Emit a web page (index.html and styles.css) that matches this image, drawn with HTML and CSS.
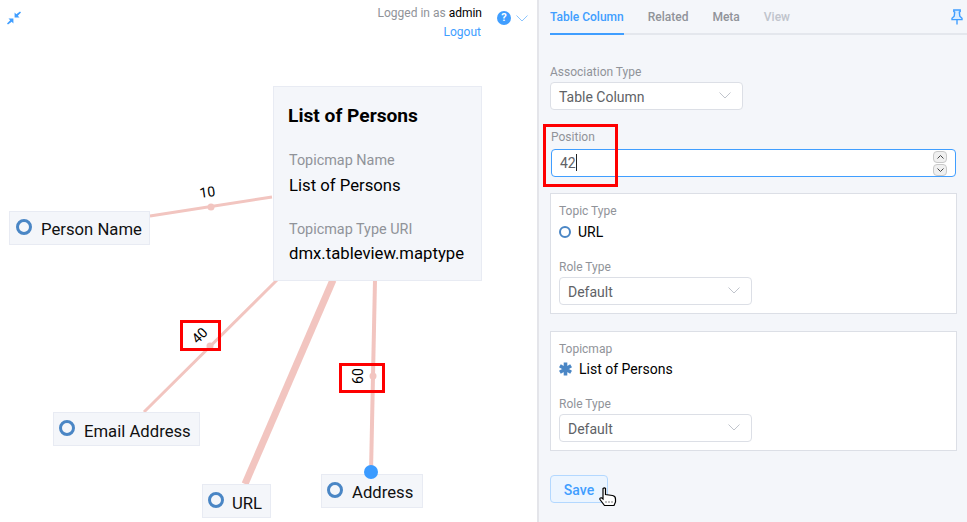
FILE: index.html
```html
<!DOCTYPE html>
<html lang="en">
<head>
    <meta charset="UTF-8">
    <title>Table Column</title>
    <link rel="stylesheet" href="styles.css">
</head>
<body>
    <div class="app">
        <!-- Topicmap canvas -->
        <div class="canvas">
            <svg class="edges" width="537" height="522">
                <line class="edge" x1="150" y1="216" x2="272" y2="197" stroke-width="3"/>
                <circle class="edge-dot" cx="211" cy="207" r="3.5"/>
                <line class="edge" x1="144" y1="412" x2="277" y2="280" stroke-width="3"/>
                <circle class="edge-dot" cx="210" cy="346" r="3.5"/>
                <line class="edge" x1="245" y1="484" x2="333" y2="280" stroke-width="7"/>
                <line class="edge" x1="371" y1="472" x2="375" y2="280" stroke-width="4"/>
                <circle class="edge-dot" cx="373" cy="376" r="3.5"/>
                <text class="edge-label" transform="translate(208 197) rotate(-8)">10</text>
                <text class="edge-label" transform="translate(203 339) rotate(-45)">40</text>
                <text class="edge-label" transform="translate(363 376) rotate(-90)">60</text>
            </svg>

            <svg class="fullscreen-icon" width="14" height="14" viewBox="0 0 14 14">
                <path d="M13 0.5 L14 1.5 L10.8 4.7 L12.5 6.4 L7.6 6.4 L7.6 1.5 L9.3 3.2 Z"/>
                <path d="M1 13.5 L0 12.5 L3.2 9.3 L1.5 7.6 L6.4 7.6 L6.4 12.5 L4.7 10.8 Z"/>
            </svg>

            <div class="login">
                <div class="login-text">
                    <div class="login-state">Logged in as <span class="login-user">admin</span></div>
                    <div class="login-link">Logout</div>
                </div>
                <div class="help">?</div>
                <svg class="help-arrow" width="12" height="7" viewBox="0 0 12 7"><path d="M0.5 0.5 L6 6 L11.5 0.5"/></svg>
            </div>

            <div class="node node-person"><span class="ring"></span>Person Name</div>
            <div class="node node-email"><span class="ring"></span>Email Address</div>
            <div class="node node-url"><span class="ring"></span>URL</div>
            <div class="node node-address"><span class="ring"></span>Address</div>
            <div class="handle"></div>

            <div class="card">
                <div class="card-title">List of Persons</div>
                <div class="card-label">Topicmap Name</div>
                <div class="card-value">List of Persons</div>
                <div class="card-label card-label-2">Topicmap Type URI</div>
                <div class="card-value">dmx.tableview.maptype</div>
            </div>

            <div class="mark mark-40"></div>
            <div class="mark mark-60"></div>
        </div>

        <!-- Detail panel -->
        <div class="panel">
            <div class="tabs">
                <div class="tab tab-active">Table Column</div>
                <div class="tab">Related</div>
                <div class="tab">Meta</div>
                <div class="tab tab-disabled">View</div>
                <svg class="pin" width="12" height="16" viewBox="0 0 12 16">
                    <path d="M2.8 1 H9.2 V2.6 L8.3 3.2 L8.8 7.2 L11 9.2 V10.6 H1 V9.2 L3.2 7.2 L3.7 3.2 L2.8 2.6 Z"/>
                    <path d="M6 10.6 V15.5"/>
                </svg>
            </div>

            <div class="form">
                <div class="field-label">Association Type</div>
                <div class="select select-assoc">
                    <span>Table Column</span>
                    <svg class="select-arrow" width="12" height="7" viewBox="0 0 12 7"><path d="M0.5 0.5 L6 6 L11.5 0.5"/></svg>
                </div>

                <div class="position">
                    <div class="field-label field-label-position">Position</div>
                    <div class="number-input">
                        <span>42</span><span class="caret"></span>
                        <div class="stepper">
                            <div class="step"><svg width="7" height="4" viewBox="0 0 7 4"><path d="M0.5 3.5 L3.5 0.5 L6.5 3.5"/></svg></div>
                            <div class="step"><svg width="7" height="4" viewBox="0 0 7 4"><path d="M0.5 0.5 L3.5 3.5 L6.5 0.5"/></svg></div>
                        </div>
                    </div>
                    <div class="mark mark-position"></div>
                </div>

                <div class="box box-topic">
                    <div class="field-label">Topic Type</div>
                    <div class="player"><span class="ring ring-small"></span>URL</div>
                    <div class="field-label field-label-role">Role Type</div>
                    <div class="select">
                        <span>Default</span>
                        <svg class="select-arrow" width="12" height="7" viewBox="0 0 12 7"><path d="M0.5 0.5 L6 6 L11.5 0.5"/></svg>
                    </div>
                </div>

                <div class="box box-map">
                    <div class="field-label">Topicmap</div>
                    <div class="player">
                        <svg class="asterisk" width="13" height="14" viewBox="0 0 13 14">
                            <path d="M6.5 0.5 V13.5 M0.9 3.8 L12.1 10.2 M0.9 10.2 L12.1 3.8"/>
                        </svg>
                        List of Persons
                    </div>
                    <div class="field-label field-label-role">Role Type</div>
                    <div class="select">
                        <span>Default</span>
                        <svg class="select-arrow" width="12" height="7" viewBox="0 0 12 7"><path d="M0.5 0.5 L6 6 L11.5 0.5"/></svg>
                    </div>
                </div>

                <div class="save-row">
                    <div class="save">Save</div>
                    <svg class="hand" width="18" height="20" viewBox="0 0 18 20">
                        <path d="M4 1.5 Q5.5 0.3 6.5 1.5 V7.5 L13.5 8.5 Q16.5 9 16.5 12 V15 L15 18.5 H5.5 L1 12.5 Q0.5 10.5 2.5 10.8 L4 12 Z"/>
                        <path class="hand-dots" d="M7 14.5 V16.5 M10 14.5 V16.5 M13 14.5 V16.5"/>
                    </svg>
                </div>
            </div>
        </div>
    </div>
</body>
</html>
```

FILE: styles.css
```css
html, body {
    margin: 0;
    height: 100%;
    overflow: hidden;
}
body {
    font-family: Roboto, "Liberation Sans", sans-serif;
    background-color: #fff;
    color: #000;
}
.app {
    display: flex;
    height: 522px;
}

/* Canvas */
.canvas {
    position: relative;
    width: 537px;
    flex: none;
}
.edges {
    position: absolute;
    left: 0;
    top: 0;
}
.edge {
    stroke: #f2c5c0;
}
.edge-dot {
    fill: #f2c5c0;
}
.handle {
    position: absolute;
    left: 364px;
    top: 465px;
    width: 14px;
    height: 14px;
    border-radius: 50%;
    background-color: #3b9bff;
}
.edge-label {
    font-size: 14px;
    text-anchor: middle;
    fill: #000;
}
.fullscreen-icon {
    position: absolute;
    left: 7px;
    top: 11px;
    fill: #409eff;
}
.login {
    position: absolute;
    right: 9px;
    top: 4px;
    display: flex;
    font-size: 12px;
}
.login-text {
    text-align: right;
    margin-right: 15px;
    line-height: 19px;
}
.login-state {
    color: #909399;
}
.login-user {
    color: #000;
}
.login-link {
    color: #409eff;
    padding-right: 1px;
}
.help {
    width: 14px;
    height: 14px;
    margin-top: 7px;
    border-radius: 50%;
    background-color: #409eff;
    color: #fff;
    font-size: 11px;
    font-weight: bold;
    line-height: 14px;
    text-align: center;
}
.help-arrow {
    margin: 11px 0 0 5px;
    fill: none;
    stroke: #8cc5ff;
}
.node {
    position: absolute;
    display: flex;
    align-items: center;
    height: 34px;
    box-sizing: border-box;
    padding: 2px 0 0 5px;
    background-color: #f4f6fa;
    border: 1px solid #e8ebf3;
    font-size: 16.7px;
    color: #111;
}
.node-person { left: 9px; top: 211px; width: 141px; padding-left: 6px; }
.node-email { left: 53px; top: 412px; width: 147px; padding-top: 4px; }
.node-url { left: 202px; top: 484px; width: 69px; padding-top: 4px; }
.node-address { left: 321px; top: 474px; width: 102px; }
.ring {
    width: 16px;
    height: 16px;
    box-sizing: border-box;
    border: 3px solid #4a86c5;
    border-radius: 50%;
    margin: -4px 9px 0 0;
    flex: none;
}
.node-email .ring, .node-url .ring {
    margin-top: -6px;
}
.node-url .ring {
    margin-right: 8px;
}
.card {
    position: absolute;
    left: 273px;
    top: 86px;
    width: 209px;
    height: 195px;
    box-sizing: border-box;
    padding: 17px 14px 0 14px;
    background-color: #f4f6fa;
    border: 1px solid #e8ebf3;
}
.card-title {
    font-size: 19.2px;
    font-weight: bold;
    line-height: 24px;
    margin-bottom: 24px;
}
.card-label {
    padding-left: 1px;
    font-size: 14.4px;
    line-height: 18px;
    color: #909399;
    margin-bottom: 6px;
}
.card-label-2 {
    margin-top: 25px;
}
.card-value {
    padding-left: 1px;
    font-size: 16.7px;
    line-height: 20px;
}
.card-label-2 + .card-value {
    margin-top: -1px;
}
.mark {
    position: absolute;
    box-sizing: border-box;
    border: 3px solid #fe0000;
}
.mark-40 { left: 180px; top: 320px; width: 41px; height: 31px; }
.mark-60 { left: 339px; top: 363px; width: 46px; height: 30px; }

/* Detail panel */
.panel {
    flex: 1;
    background-color: #f4f6fa;
    border-left: 2px solid #e4e5ea;
    padding-left: 11px;
    min-width: 0;
}
.tabs {
    display: flex;
    height: 33px;
    border-bottom: 2px solid #e4e7ed;
    font-size: 12px;
    font-weight: 500;
    line-height: 35px;
    position: relative;
}
.tab {
    color: #909399;
    margin-right: 24px;
    height: 35px;
    box-sizing: border-box;
}
.tab-active {
    color: #409eff;
    border-bottom: 2px solid #409eff;
}
.tab-disabled {
    color: #c0c4cc;
}
.pin {
    position: absolute;
    right: 4px;
    top: 9px;
    fill: #d9ecff;
    stroke: #409eff;
    stroke-width: 1.4;
}
.form {
    padding-top: 30px;
}
.field-label {
    font-size: 12px;
    line-height: 14px;
    color: #909399;
    margin-bottom: 3px;
}
.select {
    display: flex;
    align-items: center;
    justify-content: space-between;
    width: 193px;
    height: 28px;
    box-sizing: border-box;
    padding: 1px 11px 0 8px;
    background-color: #fff;
    border: 1px solid #dcdfe6;
    border-radius: 4px;
    font-size: 14px;
    color: #606266;
}
.select-arrow {
    fill: none;
    stroke: #c0c4cc;
    margin-top: -3px;
}
.position {
    position: relative;
    margin-top: 20px;
    padding-left: 1px;
}
.field-label-position {
    margin-bottom: 5px;
}
.number-input {
    display: flex;
    align-items: center;
    position: relative;
    width: 405px;
    height: 28px;
    box-sizing: border-box;
    padding: 0 0 1px 8px;
    background-color: #fff;
    border: 1px solid #409eff;
    border-radius: 4px;
    font-size: 14px;
    color: #606266;
}
.caret {
    width: 1px;
    height: 17px;
    background-color: #222;
}
.stepper {
    position: absolute;
    right: 8px;
    top: 1px;
    display: flex;
    flex-direction: column;
    gap: 1px;
}
.step {
    display: flex;
    align-items: center;
    justify-content: center;
    width: 14px;
    height: 12px;
    background-color: #f0f0f0;
    border: 1px solid #c9c9c9;
    border-radius: 4px;
    box-sizing: border-box;
}
.step svg {
    fill: none;
    stroke: #444;
}
.mark-position {
    left: -7px;
    top: -6px;
    width: 75px;
    height: 63px;
}
.box {
    width: 407px;
    height: 121px;
    box-sizing: border-box;
    padding: 10px 8px 0 8px;
    background-color: #fff;
    border: 1px solid #dcdfe6;
    margin-top: 16px;
}
.box-map {
    height: 120px;
    margin-top: 17px;
}
.player {
    display: flex;
    align-items: center;
    height: 20px;
    font-size: 14px;
    color: #000;
    margin-top: 4px;
}
.box-map .player {
    margin-top: 3px;
}
.ring-small {
    width: 12px;
    height: 12px;
    border-width: 2px;
    margin: 0 7px 0 0;
}
.asterisk {
    margin-right: 7px;
    stroke: #4a86c5;
    stroke-width: 3.6;
}
.field-label-role {
    margin-top: 18px;
}
.select .select-arrow {
    margin-right: 0;
}
.save-row {
    position: relative;
    margin-top: 24px;
}
.save {
    width: 58px;
    height: 28px;
    box-sizing: border-box;
    background-color: #ecf5ff;
    border: 1px solid #b3d8ff;
    border-radius: 4px;
    color: #409eff;
    font-size: 14px;
    font-weight: 500;
    line-height: 28px;
    text-align: center;
}
.hand {
    position: absolute;
    left: 49px;
    top: 12px;
    fill: #fff;
    stroke: #000;
    stroke-width: 1.2;
}
.hand-dots {
    stroke-width: 1;
    stroke-dasharray: 1 1;
}
```
